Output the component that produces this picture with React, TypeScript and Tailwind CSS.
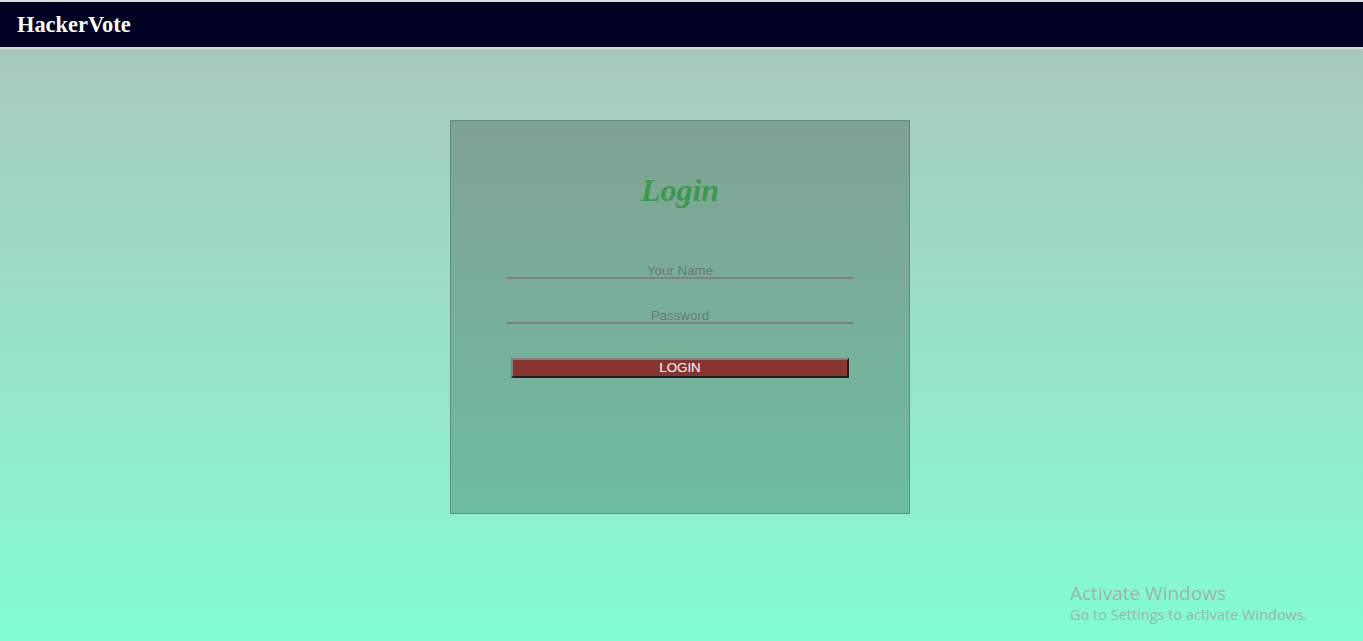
import React from 'react';

const App: React.FC = () => {
  return (
    <div className="relative min-h-[641px] w-full overflow-hidden bg-gradient-to-b from-[#a9c5b9] to-[#80fdd2] font-['Liberation_Sans',Arial,sans-serif]">
      <nav className="flex h-[49px] items-center border-y-2 border-[#d8dcdc] bg-[#000020] pl-[17px]">
        <span className="font-['Liberation_Serif','Times_New_Roman',serif] text-[22.4px] font-bold text-white">
          HackerVote
        </span>
      </nav>

      <div className="flex justify-center pr-[3px] pt-[71px]">
        <div className="flex h-[394px] w-[460px] flex-col items-center border border-[#5f8c7c] bg-black/[0.22]">
          <h1 className="mt-[49px] font-['Liberation_Serif','Times_New_Roman',serif] text-[32px] font-bold italic leading-[40px] text-[#3a9a4b]">
            Login
          </h1>

          <form className="mt-[45px] flex w-[348px] flex-col items-center" onSubmit={(e) => e.preventDefault()}>
            <input
              type="text"
              placeholder="Your Name"
              className="h-[24px] w-full border-b-2 border-[#808080] bg-transparent pt-[8px] text-center text-[13.33px] leading-[14px] text-[#555] outline-none placeholder:text-[#687a72]"
            />
            <input
              type="password"
              placeholder="Password"
              className="mt-[21px] h-[24px] w-full border-b-2 border-[#808080] bg-transparent pt-[8px] text-center text-[13.33px] leading-[14px] text-[#555] outline-none placeholder:text-[#687a72]"
            />
            <button
              type="submit"
              className="mt-[34px] h-[20px] w-[338px] border-2 border-t-[#808080] border-l-[#808080] border-r-[#1e1e1e] border-b-[#1e1e1e] bg-[#8a342f] pb-[1px] text-[13.33px] leading-none text-white"
            >
              LOGIN
            </button>
          </form>
        </div>
      </div>

      <div className="pointer-events-none absolute left-[1070px] top-[581px] font-['Open_Sans','Noto_Sans',sans-serif] text-[#9cb5ab]">
        <div className="text-[19px] leading-[24px]">Activate Windows</div>
        <div className="text-[14.5px] leading-[20px]">Go to Settings to activate Windows.</div>
      </div>
    </div>
  );
};

export default App;
